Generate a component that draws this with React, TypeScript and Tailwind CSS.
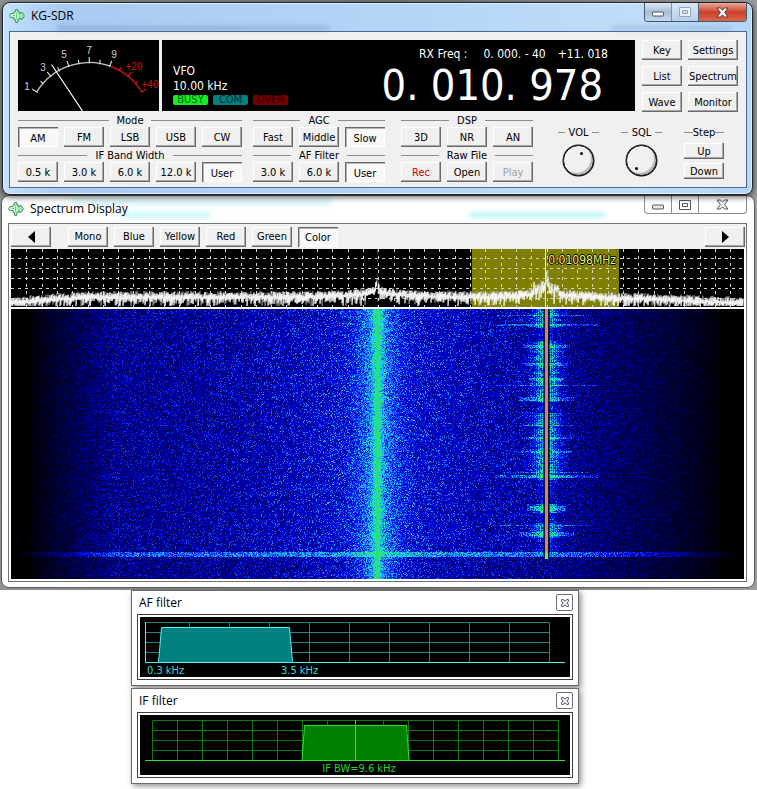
import { useEffect, useRef, useState } from 'react'
import type { ReactNode } from 'react'
import clsx from 'clsx'

// small seeded generator so the noise is the same on every load
const createRandom = (seed: number) => {
    let s = seed
    return () => {
        s = (s * 1664525 + 1013904223) >>> 0
        return s / 4294967296
    }
}

const AppIcon = () => (
    <svg width="16" height="14" viewBox="0 0 16 14" aria-hidden="true" className="shrink-0">
        <path
            d="M.6 6.5 1.8 4.6H5V2.8h1.6V.6h2.2v2.2h1.4v2h1.4V3.6h1.6v1.2h1L15.4 7l-1.2 2h-1v1.2h-1.6V9h-1.4v1.6H8.8v2.8H6.6v-2.8H5V8.6H1.8z"
            fill="#d2f7dc"
            stroke="#2f9a52"
        />
        <path d="M7.7 3.5v6.5M10.8 5.5v3M4 6.6h2M13.2 6v2" stroke="#5cc07c" fill="none" />
    </svg>
)

type BevelButtonProps = {
    children: ReactNode
    pressed?: boolean
    className?: string
    disabled?: boolean
    label?: string
    onClick?: () => void
}

const BevelButton = ({ children, pressed, className, disabled, label, onClick }: BevelButtonProps) => (
    <button
        type="button"
        aria-label={label}
        aria-pressed={pressed}
        disabled={disabled}
        onClick={onClick}
        className={clsx(
            'flex shrink-0 items-center justify-center whitespace-nowrap disabled:text-[#a0a0a0]',
            pressed
                ? 'bg-[#f8f8f8] pt-0.5 shadow-[inset_1px_1px_0_#696969,inset_2px_2px_0_#b4b4b4,inset_-1px_-1px_0_#fff]'
                : 'bg-[#f0f0f0] shadow-[inset_-1px_-1px_0_#696969,inset_-2px_-2px_0_#a8a8a8,inset_1px_1px_0_#fff]',
            className ?? 'h-5 w-10',
        )}
    >
        {children}
    </button>
)

const GroupTitle = ({ children, gap = 'gap-2' }: { children: ReactNode; gap?: string }) => (
    <div className={clsx('flex h-[13px] items-center whitespace-nowrap', gap)}>
        <span className="h-px flex-1 bg-[#8c8c8c]" />
        <span>{children}</span>
        <span className="h-px flex-1 bg-[#8c8c8c]" />
    </div>
)

type ButtonGroupProps = {
    title: string
    items: string[]
    initial?: string
    gap?: string
}

const ButtonGroup = ({ title, items, initial, gap }: ButtonGroupProps) => {
    const [selected, setSelected] = useState(initial)
    return (
        <div role="group" aria-label={title}>
            <GroupTitle gap={gap}>{title}</GroupTitle>
            <div className="flex gap-1.5">
                {items.map((item) => (
                    <BevelButton key={item} pressed={selected === item} onClick={() => setSelected(item)}>
                        {item}
                    </BevelButton>
                ))}
            </div>
        </div>
    )
}

const polar = (deg: number, r: number) => {
    const a = (deg * Math.PI) / 180
    return [71.3 + Math.sin(a) * r, 84 - Math.cos(a) * r]
}

const meterLabels: [string, number, number][] = [
    ['1', 9, 50],
    ['3', 25, 31],
    ['5', 46, 18],
    ['7', 71, 14],
    ['9', 96, 18],
    ['+20', 116, 30],
    ['+40', 132, 48],
]

const SMeter = () => {
    const [x0, y0] = polar(-58.5, 61.6)
    const [x1, y1] = polar(20, 61.6)
    const [x2, y2] = polar(58.5, 61.6)
    return (
        <svg width="141" height="71" viewBox="0 0 141 71" className="shrink-0 bg-black" fill="none" aria-label="S meter">
            <path d={`M${x0} ${y0}A61.6 61.6 0 0 1 ${x1} ${y1}`} stroke="#c8c8c8" strokeWidth="1.3" />
            <path d={`M${x1} ${y1}A61.6 61.6 0 0 1 ${x2} ${y2}`} stroke="#e01010" strokeWidth="1.3" />
            {Array.from({ length: 13 }, (_, i) => {
                const deg = (i - 6) * 9.75
                const [ax, ay] = polar(deg, 60.5)
                const [bx, by] = polar(deg, i % 2 === 0 ? 67 : 65)
                return <path key={i} d={`M${ax} ${ay}L${bx} ${by}`} stroke={i > 8 ? '#e01010' : '#d8d8d8'} strokeWidth="1.2" />
            })}
            {meterLabels.map(([text, x, y]) => (
                <text
                    key={text}
                    x={x}
                    y={y}
                    textAnchor="middle"
                    fill={text.startsWith('+') ? '#c81414' : '#d0d0d0'}
                    className="font-['Liberation_Sans',sans-serif] text-[10px]"
                >
                    {text}
                </text>
            ))}
            <path d="M33.5 24.5 64.5 71" stroke="#fff" strokeWidth="1.2" />
        </svg>
    )
}

const Knob = ({ name, value, dot }: { name: string; value: number; dot: string }) => (
    <label className="flex w-[41px] flex-col items-center gap-1.5 pt-3">
        <span className="flex h-[13px] w-full items-center gap-1">
            <span className="h-px flex-1 bg-[#8c8c8c]" />
            {name}
            <span className="h-px flex-1 bg-[#8c8c8c]" />
        </span>
        <span className="relative size-[31px]">
            <input
                type="range"
                defaultValue={value}
                className="block size-[31px] appearance-none rounded-full border border-[#111] bg-[#f0f0f0] shadow-[inset_-2px_-2px_1px_#b4b4b4,inset_1px_1px_1px_#fff,0_0_0_0.5px_#111] [&::-webkit-slider-thumb]:opacity-0"
            />
            <span className={clsx('pointer-events-none absolute size-[3px] rounded-full bg-black', dot)} />
        </span>
    </label>
)

const MinimizeIcon = ({ fill }: { fill: string }) => (
    <svg width="14" height="6" viewBox="0 0 14 6" aria-hidden="true">
        <rect x="1.5" y="1" width="11" height="4" rx=".5" fill={fill} stroke="#50565e" />
    </svg>
)

const MaximizeIcon = ({ stroke }: { stroke: string }) => (
    <svg width="12" height="10" viewBox="0 0 12 10" aria-hidden="true">
        <path d="M.5.5h11v9H.5zM3.5 3.5v3h5v-3z" fill="#fff" fillOpacity=".6" fillRule="evenodd" stroke={stroke} />
    </svg>
)

const CloseIcon = ({ stroke, fill }: { stroke: string; fill: string }) => (
    <svg width="13" height="11" viewBox="0 0 13 11" aria-hidden="true">
        <path
            d="M1 1h3.6l1.9 2.2L8.4 1H12L8.6 5.5 12 10H8.4L6.5 7.8 4.6 10H1l3.4-4.5z"
            fill={fill}
            stroke={stroke}
            strokeLinejoin="round"
        />
    </svg>
)

const ReceiverWindow = () => (
    <section className="relative z-10 mr-1 ml-0.5 rounded-lg border border-[#20262e] bg-[linear-gradient(90deg,#c3e0fb,#a9cbf2_8%,#b4d4f6_50%,#c0dcf8_85%,#b5d5f7)] pr-[5px] pb-1.5 pl-1.5 shadow-[0_2px_6px_rgba(0,0,0,0.65),inset_0_0_0_1px_#e2f1ff]">
        <header className="relative flex h-7 items-start">
            <span className="pointer-events-none absolute top-[23px] left-12 h-1 w-[272px] bg-[#5877a0]/35 blur-[2px]" />
            <span className="pointer-events-none absolute top-[23px] right-4 h-1 w-[120px] bg-[#5877a0]/25 blur-[2px]" />
            <div className="relative flex items-center gap-1.5 pt-[3px]">
                <AppIcon />
                <h1 className="font-['Open_Sans','Noto_Sans',sans-serif] text-[12px] leading-5">KG-SDR</h1>
            </div>
            <div className="ml-auto flex h-[19px] overflow-hidden rounded-b border border-t-0 border-[#46566c]">
                <button type="button" aria-label="Minimize" className="flex w-[27px] items-center justify-center border-r border-[#7d92ad] bg-linear-to-b from-[#dfe9f5] via-[#a9bdd6] to-[#c4d8ee] pt-1">
                    <MinimizeIcon fill="#fff" />
                </button>
                <button type="button" aria-label="Maximize" disabled className="flex w-[27px] items-center justify-center border-r border-[#56637a] bg-linear-to-b from-[#d8e6f6] to-[#b9cfe8]">
                    <MaximizeIcon stroke="#93a5bb" />
                </button>
                <button type="button" aria-label="Close" className="flex w-[47px] items-center justify-center bg-linear-to-b from-[#e9a899] via-[#c8402a] to-[#d9674b]">
                    <CloseIcon stroke="#5f3a3a" fill="#fff" />
                </button>
            </div>
        </header>

        <div className="border border-[#486a96] bg-[#f0f0f0] px-2 pt-2 pb-[5px] text-[11px] leading-[13px]">
            <div className="flex">
                <SMeter />
                <div className="ml-[3px] flex h-[71px] flex-1 justify-between bg-black text-[12px] text-white">
                    <div className="flex flex-col pt-6 pl-[11px] leading-[15px]">
                        <span>VFO</span>
                        <span>10.00 kHz</span>
                        <div className="mt-px flex gap-[5px] text-[11px] leading-[10px]">
                            <span className="w-[35px] rounded-xs bg-[#10f020] text-center text-[#075c0c]">BUSY</span>
                            <span className="w-[35px] rounded-xs bg-[#008080] text-center text-[#003030]">COM</span>
                            <span className="w-[35px] rounded-xs bg-[#780000] text-center text-[#280000]">OVER</span>
                        </div>
                    </div>
                    <div className="flex flex-col items-end pt-2">
                        <div className="flex pr-[27px]">
                            <span>RX Freq :</span>
                            <span className="ml-4">0. 000. - 40</span>
                            <span className="ml-3">+11. 018</span>
                        </div>
                        <div className="pr-8 text-[43px] leading-[48px] whitespace-nowrap">0. 010. 978</div>
                    </div>
                </div>
                <div className="ml-[7px] flex flex-col gap-1.5">
                    <BevelButton>Key</BevelButton>
                    <BevelButton>List</BevelButton>
                    <BevelButton>Wave</BevelButton>
                </div>
                <div className="ml-1.5 flex flex-col gap-1.5">
                    <BevelButton className="h-5 w-[50px]">Settings</BevelButton>
                    <BevelButton className="h-5 w-[50px]">Spectrum</BevelButton>
                    <BevelButton className="h-5 w-[50px]">Monitor</BevelButton>
                </div>
            </div>

            <div className="flex pt-0.5">
                <div className="flex flex-col gap-0.5">
                    <ButtonGroup title="Mode" items={['AM', 'FM', 'LSB', 'USB', 'CW']} initial="AM" />
                    <ButtonGroup title="IF Band Width" items={['0.5 k', '3.0 k', '6.0 k', '12.0 k', 'User']} initial="User" />
                </div>
                <div className="ml-[11px] flex flex-col gap-0.5">
                    <ButtonGroup title="AGC" items={['Fast', 'Middle', 'Slow']} initial="Slow" />
                    <ButtonGroup title="AF Filter" items={['3.0 k', '6.0 k', 'User']} initial="User" />
                </div>
                <div className="ml-4 flex flex-col gap-0.5">
                    <ButtonGroup title="DSP" items={['3D', 'NR', 'AN']} />
                    <div role="group" aria-label="Raw File">
                        <GroupTitle>Raw File</GroupTitle>
                        <div className="flex gap-1.5">
                            <BevelButton className="h-5 w-10 text-[#d80000]">Rec</BevelButton>
                            <BevelButton>Open</BevelButton>
                            <BevelButton disabled>Play</BevelButton>
                        </div>
                    </div>
                </div>
                <div className="ml-[25px] flex gap-[22px]">
                    <Knob name="VOL" value={55} dot="top-[7px] left-[17px]" />
                    <Knob name="SQL" value={10} dot="top-[22px] left-[9px]" />
                    <div role="group" aria-label="Step" className="flex w-10 flex-col gap-1 pt-3">
                        <GroupTitle gap="gap-0">Step</GroupTitle>
                        <BevelButton className="h-4 w-10">Up</BevelButton>
                        <BevelButton className="h-4 w-10">Down</BevelButton>
                    </div>
                </div>
            </div>
        </div>
    </section>
)

const PLOT_W = 733
const PLOT_H = 58
const FALL_H = 270
const CARRIER = 366
const TUNED = 535

const buildTrace = (seed: number, lift: number) => {
    const random = createRandom(seed)
    let d = ''
    for (let x = 0; x < PLOT_W; x++) {
        const edge = Math.min(1, x / 70, (PLOT_W - x) / 150)
        let y = 54 - edge * 6 - lift
        y -= 6 * Math.exp(-Math.abs(x - CARRIER) / 24)
        y -= 4 * Math.exp(-(((x - TUNED) / 26) ** 2))
        if (Math.abs(x - CARRIER) < 3) y -= 9 - Math.abs(x - CARRIER) * 3
        if (Math.abs(x - TUNED) < 13) y -= random() * 9
        if (Math.abs(x - TUNED - 1) < 2) y -= 10
        const top = y - random() * 5
        const low = y + random() * random() * 12 + 1
        d += `${x === 0 ? 'M' : 'L'}${x} ${top.toFixed(1)}L${x} ${Math.min(57, low).toFixed(1)}`
    }
    return d
}

const backTrace = buildTrace(77, 1)
const frontTrace = buildTrace(5, 0)

const SpectrumPlot = () => (
    <div className="relative bg-black">
        <svg viewBox={`0 0 ${PLOT_W} ${PLOT_H}`} preserveAspectRatio="none" className="block h-[58px] w-full" fill="none">
            <rect x="461" y="0" width="147" height={PLOT_H} fill="#808000" />
            <g stroke="#d4d4d4" strokeDasharray="3 4" shapeRendering="crispEdges">
                {Array.from({ length: 47 }, (_, i) => (
                    <path key={i} d={`M${Math.round(15.3 * (i + 1)) + 0.5} 0V${PLOT_H}`} />
                ))}
                {[9.5, 19.5, 29.5, 39.5, 49.5].map((y) => (
                    <path key={y} d={`M0 ${y}H${PLOT_W}`} />
                ))}
            </g>
            <path d={backTrace} stroke="#b4b4b4" strokeWidth=".6" />
            <path d={frontTrace} stroke="#fff" strokeWidth=".8" />
            <path d={`M366.5 0V${PLOT_H}`} stroke="#901010" strokeDasharray="5 3" />
            <path d={`M534.5 0V${PLOT_H}`} stroke="#ffff30" />
        </svg>
        <span className="absolute top-1 left-[73.3%] text-[12px] leading-[14px] text-[#f4f46a] [text-shadow:1px_0_#000,-1px_0_#000,0_1px_#000,0_-1px_#000]">
            0.01098MHz
        </span>
    </div>
)

// level (0..1) to black / blue / cyan / green
const stops: [number, number, number, number][] = [
    [0, 0, 0, 0],
    [0.18, 0, 0, 110],
    [0.36, 0, 0, 225],
    [0.55, 20, 90, 255],
    [0.72, 40, 180, 255],
    [0.86, 0, 230, 220],
    [1, 50, 230, 120],
]

const levelToColor = (level: number) => {
    const v = Math.max(0, Math.min(1, level))
    let i = 1
    while (i < stops.length - 1 && v > stops[i][0]) i++
    const a = stops[i - 1]
    const b = stops[i]
    const t = (v - a[0]) / (b[0] - a[0])
    return [a[1] + (b[1] - a[1]) * t, a[2] + (b[2] - a[2]) * t, a[3] + (b[3] - a[3]) * t]
}

// row, half width, height of the wide bursts around the tuned station
const bursts = [
    [6, 50, 1],
    [15, 52, 2],
    [36, 24, 3],
    [54, 22, 3],
    [69, 18, 3],
    [76, 50, 1],
    [88, 28, 4],
    [116, 28, 1],
    [128, 26, 2],
    [142, 26, 2],
    [163, 44, 1],
    [166, 52, 3],
    [197, 20, 5],
    [216, 48, 1],
    [223, 28, 4],
]

const baseLevel = (x: number) => {
    const left = Math.max(0, Math.min(1, (x - 14) / 90))
    const right = Math.max(0, Math.min(1, (712 - x) / 170))
    const mid = 0.21 + 0.09 * Math.exp(-(((x - CARRIER) / 150) ** 2))
    return mid * left * right ** 0.8
}

const Waterfall = () => {
    const ref = useRef<HTMLCanvasElement>(null)

    useEffect(() => {
        const ctx = ref.current?.getContext('2d')
        if (!ctx) return
        const random = createRandom(2024)
        const image = ctx.createImageData(PLOT_W, FALL_H)
        for (let y = 0; y < FALL_H; y++) {
            const active = y < 248
            const quiet = (y > 18 && y < 32) || (y > 92 && y < 104) || (y > 170 && y < 195) || (y > 203 && y < 214) || y > 228
            const power = quiet ? 0.25 : 0.55 + random() * 0.45
            const burst = bursts.find((b) => y >= b[0] && y < b[0] + b[2])
            const spread = quiet ? 8 : 9 + random() * 5
            const rowGain = (y >= 248 ? 0.85 : 0.96) + random() * 0.1
            for (let x = 0; x < PLOT_W; x++) {
                const noise = random()
                let v = baseLevel(x) * rowGain * (0.5 + noise * 1.1)
                if (noise > 0.9) v *= 1.4
                const dc = Math.abs(x - CARRIER)
                v += 0.24 * Math.exp(-((dc / 20) ** 2)) * (0.3 + random() * 1.2)
                v += 0.12 * Math.exp(-dc / 40) * random() * 2
                v += 0.32 * Math.exp(-((dc / 5) ** 2))
                const ds = Math.abs(x - TUNED)
                if (active && ds < 60) {
                    const stripe = x % 2 === 0 ? 0.55 : 1.1
                    v += power * Math.exp(-((ds / spread) ** 2)) * stripe * (0.25 + random() * 0.85)
                    if (burst && ds < burst[1]) v += 0.55 * random() * (1.15 - ds / burst[1] / 2)
                }
                if (y >= 243 && y < 248) v += (0.1 + random() * 0.38) * Math.max(0, Math.min(1, (x - 5) / 120, (735 - x) / 150))
                let [r, g, b] = levelToColor(v)
                if (dc < 1) [r, g, b] = [110, 200, 70]
                else if (dc < 2) [r, g, b] = [40, 220, 130]
                if (active && ds < 4) {
                    if (ds === 3) [r, g, b] = [r * 0.5, g * 0.5, b * 0.6]
                    else if (ds === 2) [r, g, b] = [20, 20, 50]
                    else [r, g, b] = [205, 130, 135]
                }
                if (y >= 244 && y < 250 && ds < 2) [r, g, b] = [90, 240, 120]
                const p = (y * PLOT_W + x) * 4
                image.data[p] = r
                image.data[p + 1] = g
                image.data[p + 2] = b
                image.data[p + 3] = 255
            }
        }
        ctx.putImageData(image, 0, 0)
    }, [])

    return <canvas ref={ref} width={PLOT_W} height={FALL_H} aria-label="Waterfall" className="block h-[270px] w-full bg-black" />
}

const palettes = ['Mono', 'Blue', 'Yellow', 'Red', 'Green', 'Color']

const SpectrumWindow = () => {
    const [palette, setPalette] = useState('Color')
    return (
        <section className="mr-0.5 ml-px rounded-lg border border-[#5c5f5c] bg-white pr-[7px] pb-[5px] pl-1.5">
            <header className="relative flex h-[27px] items-start">
                <span className="pointer-events-none absolute top-0.5 left-16 h-1.5 w-[260px] bg-[#35c8d8]/25 blur-[3px]" />
                <span className="pointer-events-none absolute top-4 left-28 h-1.5 w-[90px] bg-[#35e0f0]/25 blur-[2px]" />
                <span className="pointer-events-none absolute top-4 right-[142px] h-1.5 w-[136px] bg-[#35e0f0]/30 blur-[2px]" />
                <div className="relative flex items-center gap-1.5 pt-[3px]">
                    <AppIcon />
                    <h2 className="font-['Open_Sans','Noto_Sans',sans-serif] text-[12px] leading-5">Spectrum Display</h2>
                </div>
                <div className="ml-auto flex h-[18px] rounded-b border border-t-0 border-[#8a8f94]">
                    <button type="button" aria-label="Minimize" className="flex w-[27px] items-center justify-center border-r border-[#8a8f94] pt-1">
                        <MinimizeIcon fill="#e8e8e8" />
                    </button>
                    <button type="button" aria-label="Maximize" className="flex w-[27px] items-center justify-center border-r border-[#8a8f94]">
                        <MaximizeIcon stroke="#50565e" />
                    </button>
                    <button type="button" aria-label="Close" className="flex w-[47px] items-center justify-center">
                        <CloseIcon stroke="#50565e" fill="#f2f2f2" />
                    </button>
                </div>
            </header>

            <div className="border border-[#6e7276] bg-white pb-0.5 text-[11px] leading-[13px]">
                <div className="flex h-[25px] items-center bg-[#f0f0f0] pr-px pl-0.5">
                    <BevelButton label="Scroll left">
                        <svg width="7" height="12" viewBox="0 0 7 12" aria-hidden="true"><path d="M7 0v12L0 6z" /></svg>
                    </BevelButton>
                    <div className="ml-[17px] flex gap-1.5">
                        {palettes.map((name) => (
                            <BevelButton key={name} pressed={palette === name} onClick={() => setPalette(name)}>
                                {name}
                            </BevelButton>
                        ))}
                    </div>
                    <BevelButton label="Scroll right" className="ml-auto h-5 w-10">
                        <svg width="7" height="12" viewBox="0 0 7 12" aria-hidden="true"><path d="M0 0v12l7-6z" /></svg>
                    </BevelButton>
                </div>
                <div className="flex flex-col gap-0.5 px-0.5">
                    <SpectrumPlot />
                    <Waterfall />
                </div>
            </div>
        </section>
    )
}

const FilterWindow = ({ title, children }: { title: string; children: ReactNode }) => (
    <section className="w-full max-w-md border border-[#6a6d70] bg-white px-[5px] pb-[5px] shadow-[2px_2px_6px_rgba(0,0,0,0.45)]">
        <header className="flex h-[23px] items-center justify-between pl-0.5">
            <h2 className="font-['Open_Sans','Noto_Sans',sans-serif] text-[12px] leading-5">{title}</h2>
            <button type="button" aria-label={`Close ${title}`} className="flex size-[17px] items-center justify-center rounded-xs border border-[#6a7078]">
                <svg width="8" height="8" viewBox="0 0 8 8" aria-hidden="true">
                    <path d="M.6.6h2L4 2.2 5.4.6h2v2L5.8 4l1.6 1.4v2h-2L4 5.8 2.6 7.4h-2v-2L2.2 4 .6 2.6z" fill="#fff" stroke="#50565e" />
                </svg>
            </button>
        </header>
        <div className="border border-[#3c3f42] p-0.5">{children}</div>
    </section>
)

const AfFilterPlot = () => (
    <svg viewBox="0 0 430 60" className="block w-full bg-black text-[11px]" fill="none">
        <path
            d="M5.5 5.5H409.5M5.5 15.5H409.5M5.5 25.5H409.5M5.5 35.5H409.5M49.5 5.5V45M89.5 5.5V45M129.5 5.5V45M169.5 5.5V45M209.5 5.5V45M249.5 5.5V45M289.5 5.5V45M329.5 5.5V45M369.5 5.5V45M409.5 5.5V45"
            stroke="#1f8585"
        />
        <path d="M18.5 45.5 21.5 10.5H149.5L152.5 45.5" fill="#008080" stroke="#50f0f0" />
        <path d="M5.5 5V45.5H425" stroke="#50f0f0" />
        <text x="7" y="57" fill="#38d8d8">0.3 kHz</text>
        <text x="141" y="57" fill="#38d8d8">3.5 kHz</text>
    </svg>
)

const IfFilterPlot = () => (
    <svg viewBox="0 0 430 60" className="block w-full bg-black text-[11px]" fill="none">
        <path
            d="M12.5 5.5H418.5M12.5 15.5H418.5M12.5 25.5H418.5M12.5 35.5H418.5M12.5 5.5V45M37.5 5.5V45M62.5 5.5V45M87.5 5.5V45M112.5 5.5V45M137.5 5.5V45M162.5 5.5V45M187.5 5.5V45M243.5 5.5V45M268.5 5.5V45M293.5 5.5V45M318.5 5.5V45M343.5 5.5V45M368.5 5.5V45M393.5 5.5V45M418.5 5.5V45"
            stroke="#0c7a0c"
        />
        <path d="M162 45.5 164.5 10.5H266.5L269 45.5" fill="#008000" stroke="#30e030" />
        <path d="M5 45.5H425M215.5 5V45" stroke="#30e030" />
        <text x="219" y="57" textAnchor="middle" fill="#28d028">IF BW=9.6 kHz</text>
    </svg>
)

export default function App() {
    return (
        <main className="min-h-screen bg-white font-['DejaVu_Sans_Condensed','DejaVu_Sans',sans-serif] text-black">
            <div className="bg-linear-to-r from-[#8f9290] via-[#777a78] to-[#9b9e9c] pt-0.5 pb-0.5">
                <ReceiverWindow />
                <SpectrumWindow />
            </div>
            <div className="flex flex-col gap-0.5 pl-[131px]">
                <FilterWindow title="AF filter">
                    <AfFilterPlot />
                </FilterWindow>
                <FilterWindow title="IF filter">
                    <IfFilterPlot />
                </FilterWindow>
            </div>
        </main>
    )
}
